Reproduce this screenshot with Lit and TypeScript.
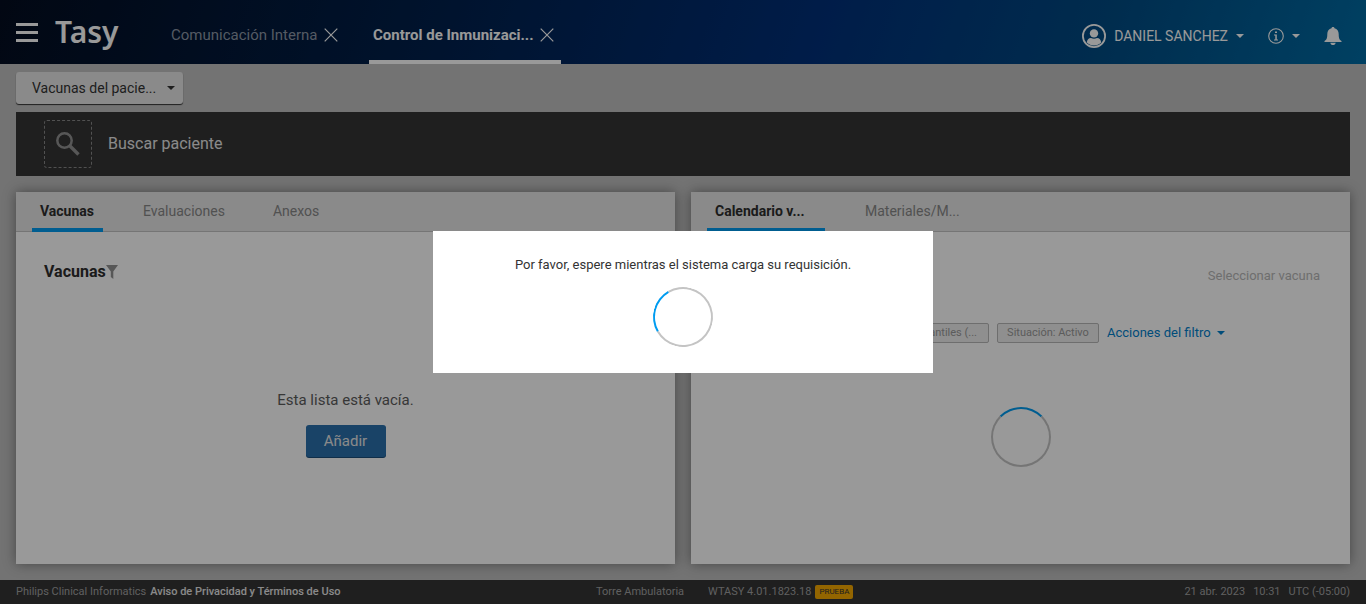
import { LitElement, html, css } from "lit";
import { customElement } from "lit/decorators.js";

const closeIcon = html`<svg width="14" height="14" viewBox="0 0 14 14" aria-hidden="true">
  <path d="M.7 .7 13.3 13.3M13.3 .7 .7 13.3" fill="none" stroke="currentColor" stroke-width="1.2" />
</svg>`;

const caret = html`<svg width="8" height="4" viewBox="0 0 8 4" aria-hidden="true">
  <path d="M0 0h8L4 4z" fill="currentColor" />
</svg>`;

@customElement("app-root")
export class AppRoot extends LitElement {
  static styles = css`
    :host {
      display: flex;
      flex-direction: column;
      min-height: 100vh;
      background: #c0c0c0;
      color: #333;
      font-family: Roboto, sans-serif;
      font-size: 15px;
      line-height: 24px;
      white-space: nowrap;
    }
    * { box-sizing: border-box; }
    svg { display: block; flex: none; }
    button {
      font: inherit;
      color: inherit;
      background: none;
      border: 0;
      padding: 0;
      margin: 0;
    }
    a { color: inherit; text-decoration: none; }
    h1, h2, p { margin: 0; font-size: inherit; }

    .top {
      display: flex;
      height: 64px;
      padding: 0 24px 0 16px;
      color: #fff;
      background: linear-gradient(110deg, #040d20 0%, #00204c 32%, #00307a 60%, #004a82 80%, #006ca4 100%);
    }
    .menu { align-self: center; margin-right: 17px; }
    .brand {
      font-family: "Noto Sans", sans-serif;
      font-size: 30px;
      line-height: 64px;
      font-weight: 600;
      width: 112px;
    }
    .apps { display: flex; gap: 24px; flex: 1; }
    .app {
      display: flex;
      align-items: center;
      justify-content: space-between;
      width: 178px;
      padding: 14px 7px 4px 4px;
      border-bottom: 4px solid transparent;
    }
    .app.off { color: #8d97a6; }
    .app.off svg { color: #fff; }
    .app.on { border-color: #fff; font-weight: 700; width: 192px; }
    .account { display: flex; align-items: center; gap: 24px; padding-top: 8px; font-size: 14px; }
    .account button { display: flex; align-items: center; gap: 8px; }

    .bar { padding: 8px 16px; }
    .view {
      display: flex;
      align-items: center;
      justify-content: space-between;
      width: 167px;
      height: 32px;
      padding: 0 8px 0 16px;
      background: #e6e6e6;
      border-radius: 3px;
      box-shadow: 0 1px 1px #333;
      font-size: 14px;
    }
    .patient {
      display: flex;
      align-items: center;
      gap: 16px;
      height: 64px;
      margin: 0 16px 16px;
      padding: 0 28px;
      background: #343434;
      color: #e6e6e6;
      font-size: 16px;
    }
    .find {
      display: grid;
      place-items: center;
      width: 48px;
      height: 48px;
      border: 1px dashed #888;
      border-radius: 3px;
      color: #929292;
    }
    .panels {
      display: grid;
      grid-template-columns: 1fr 1fr;
      gap: 16px;
      flex: 1;
      padding: 0 16px 16px;
    }
    .panel {
      display: flex;
      flex-direction: column;
      background: #fff;
      box-shadow: 0 0 12px rgba(0, 0, 0, 0.4);
    }
    .tabs {
      display: flex;
      gap: 32px;
      height: 40px;
      padding: 0 16px;
      background: #e6e6e6;
      box-shadow: inset 0 -1px #c4c4c4;
      color: #888;
      font-size: 14px;
    }
    .tab {
      min-width: 71px;
      padding: 2px 8px 0;
      border-bottom: 4px solid transparent;
      text-align: left;
    }
    .tab.on { border-color: #009cf0; color: #2e2e2e; font-weight: 700; }
    .wide { width: 118px; }
    .body { flex: 1; display: flex; flex-direction: column; padding: 28px; }
    .title { display: flex; align-items: center; font-size: 16px; color: #2e2e2e; }
    .filter { color: #929292; }
    .empty { display: flex; flex-direction: column; align-items: center; gap: 13px; margin-top: 104px; color: #5c5c5c; }
    .add {
      width: 80px;
      height: 32px;
      border-radius: 3px;
      background: #2a70ac;
      color: #e6e6e6;
      box-shadow: 0 1px 0 #1a4d7a;
    }
    .pick { align-self: flex-end; margin: 4px 2px 0 0; font-size: 13px; color: #b8b8b8; }
    .chips { display: flex; align-items: center; gap: 8px; margin: 33px 0 62px; }
    .chip {
      height: 20px;
      padding: 0 8px;
      border: 1px solid #b8b8b8;
      border-radius: 2px;
      background: #efefef;
      color: #999;
      font-size: 11px;
      line-height: 18px;
      min-width: 102px;
      text-align: center;
    }
    .chip.group { width: 270px; padding-right: 11px; text-align: right; }
    .actions { display: flex; align-items: center; gap: 6px; font-size: 13px; color: #0080cc; }
    .spinner {
      width: 60px;
      height: 60px;
      border: 2px solid #c4c4c4;
      border-top-color: #009cf0;
      border-radius: 50%;
      align-self: center;
    }
    .foot {
      display: grid;
      grid-template-columns: 580px 1fr auto;
      height: 24px;
      padding: 0 16px;
      background: #343434;
      color: #a0a0a0;
      font-size: 11px;
    }
    .foot div { display: flex; align-items: center; gap: 4px; }
    .foot a { color: #e6e6e6; font-weight: 500; }
    .foot .place { gap: 24px; }
    .foot .version { gap: 4px; }
    .foot .clock { gap: 8px; }
    .badge {
      padding: 0 4px;
      border-radius: 2px;
      background: #f5a800;
      color: #343434;
      font-size: 8px;
      line-height: 14px;
    }

    .shade {
      position: fixed;
      inset: 0;
      display: grid;
      place-items: center;
      background: rgba(0, 0, 0, 0.4);
    }
    .wait {
      display: flex;
      flex-direction: column;
      align-items: center;
      gap: 10px;
      width: 500px;
      max-width: 100%;
      padding: 22px 24px 26px;
      background: #fff;
      font-size: 13px;
    }
    .wait .spinner { transform: rotate(-75deg); }
  `;

  render() {
    return html`
      <header class="top">
        <button class="menu" aria-label="Menú">
          <svg width="22" height="19" viewBox="0 0 22 19"><path d="M0 0h22v3H0zM0 8h22v3H0zM0 16h22v3H0z" fill="currentColor" /></svg>
        </button>
        <h1 class="brand">Tasy</h1>
        <nav class="apps">
          <button class="app off"><span>Comunicación Interna</span>${closeIcon}</button>
          <button class="app on"><span>Control de Inmunizaci...</span>${closeIcon}</button>
        </nav>
        <div class="account">
          <button>
            <svg width="24" height="24" viewBox="0 0 24 24">
              <circle cx="12" cy="12" r="11.1" fill="none" stroke="currentColor" stroke-width="1.8" />
              <circle cx="12" cy="9.4" r="4.2" fill="currentColor" />
              <path d="M4.8 18.6c.2-3 1.7-4.7 4.2-4.7 1.9 1 4.1 1 6 0 2.5 0 4 1.7 4.2 4.7C15.5 22.5 8.5 22.5 4.8 18.6z" fill="currentColor" />
            </svg>
            <span>DANIEL SANCHEZ</span>${caret}
          </button>
          <button aria-label="Información">
            <svg width="16" height="16" viewBox="0 0 16 16">
              <circle cx="8" cy="8" r="7.3" fill="none" stroke="currentColor" stroke-width="1.1" />
              <path d="M7 3.5h2v1.6H7zM6 6.5h2.8v5H10v.9H6v-.9h1.3V7.4H6z" fill="currentColor" />
            </svg>
            ${caret}
          </button>
          <button aria-label="Notificaciones">
            <svg width="18" height="18" viewBox="0 0 18 18">
              <path d="M9 0c.9 0 1.4.5 1.5 1.3 2.7.7 4.2 2.8 4.2 5.7 0 4.2.8 5.9 2.8 7v1H.5v-1c2-1.1 2.8-2.8 2.8-7 0-2.9 1.5-5 4.2-5.7C7.6.5 8.1 0 9 0zM6.3 15.7h5.4C11.4 17.2 10.4 18 9 18s-2.4-.8-2.7-2.3z" fill="currentColor" />
            </svg>
          </button>
        </div>
      </header>

      <div class="bar"><button class="view"><span>Vacunas del pacie...</span>${caret}</button></div>

      <section class="patient">
        <button class="find" aria-label="Buscar">
          <svg width="24" height="24" viewBox="0 0 24 24">
            <circle cx="8.5" cy="8.5" r="7.2" fill="none" stroke="currentColor" stroke-width="2.5" />
            <path d="M13.5 13.5 22.5 22.5" stroke="currentColor" stroke-width="3.4" />
          </svg>
        </button>
        <span>Buscar paciente</span>
      </section>

      <main class="panels">
        <section class="panel">
          <nav class="tabs">
            <button class="tab on">Vacunas</button>
            <button class="tab">Evaluaciones</button>
            <button class="tab">Anexos</button>
          </nav>
          <div class="body">
            <h2 class="title">Vacunas
              <svg class="filter" width="12" height="14" viewBox="0 0 12 14"><path d="M0 0h12L7.3 6.5V14L4.8 12V6.5z" fill="currentColor" /></svg>
            </h2>
            <div class="empty">
              <p>Esta lista está vacía.</p>
              <button class="add">Añadir</button>
            </div>
          </div>
        </section>
        <section class="panel">
          <nav class="tabs">
            <button class="tab on wide">Calendario v...</button>
            <button class="tab">Materiales/M...</button>
          </nav>
          <div class="body">
            <button class="pick" disabled>Seleccionar vacuna</button>
            <div class="chips">
              <span class="chip group">Infantiles (...</span>
              <span class="chip">Situación: Activo</span>
              <button class="actions">Acciones del filtro ${caret}</button>
            </div>
            <div class="spinner"></div>
          </div>
        </section>
      </main>

      <footer class="foot">
        <div><span>Philips Clinical Informatics</span><a href="#">Aviso de Privacidad y Términos de Uso</a></div>
        <div class="place">
          <span>Torre Ambulatoria</span>
          <div class="version"><span>WTASY 4.01.1823.18</span><span class="badge">PRUEBA</span></div>
        </div>
        <div class="clock"><span>21 abr. 2023</span><span>10:31</span><span>UTC (-05:00)</span></div>
      </footer>

      <div class="shade">
        <div class="wait" role="dialog" aria-modal="true" aria-labelledby="wait-text">
          <p id="wait-text">Por favor, espere mientras el sistema carga su requisición.</p>
          <div class="spinner"></div>
        </div>
      </div>
    `;
  }
}
